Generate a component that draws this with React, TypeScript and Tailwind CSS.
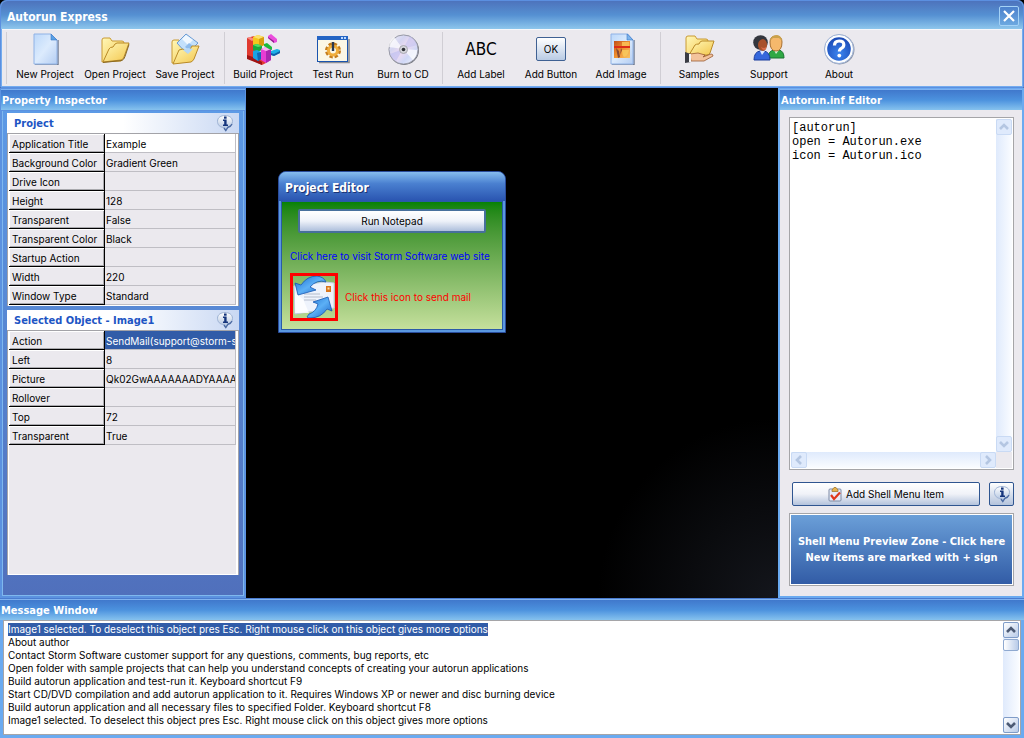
import { useState } from "react";
import type { ReactNode } from "react";

type Property = {
  name: string;
  value: string;
};

type Tool = {
  label: string;
  icon: ReactNode;
};

const projectProperties: Property[] = [
  { name: "Application Title", value: "Example" },
  { name: "Background Color", value: "Gradient Green" },
  { name: "Drive Icon", value: "" },
  { name: "Height", value: "128" },
  { name: "Transparent", value: "False" },
  { name: "Transparent Color", value: "Black" },
  { name: "Startup Action", value: "" },
  { name: "Width", value: "220" },
  { name: "Window Type", value: "Standard" },
];

const objectProperties: Property[] = [
  { name: "Action", value: "SendMail(support@storm-s" },
  { name: "Left", value: "8" },
  { name: "Picture", value: "Qk02GwAAAAAAADYAAAA" },
  { name: "Rollover", value: "" },
  { name: "Top", value: "72" },
  { name: "Transparent", value: "True" },
];

const messages = [
  "Image1 selected. To deselect this object pres Esc. Right mouse click on this object gives more options",
  "About author",
  "Contact Storm Software customer support for any questions, comments, bug reports, etc",
  "Open folder with sample projects that can help you understand concepts of creating your autorun applications",
  "Build autorun application and test-run it. Keyboard shortcut F9",
  "Start CD/DVD compilation and add autorun application to it. Requires Windows XP or newer and disc burning device",
  "Build autorun application and all necessary files to specified Folder. Keyboard shortcut F8",
  "Image1 selected. To deselect this object pres Esc. Right mouse click on this object gives more options",
];

function Gradients() {
  return (
    <svg className="absolute h-0 w-0" aria-hidden="true">
      <defs>
        <linearGradient id="page" x1="0" y1="0" x2="1" y2="1">
          <stop offset="0" stopColor="#bcd8fa" />
          <stop offset="0.5" stopColor="#dcebfd" />
          <stop offset="1" stopColor="#b4cdf2" />
        </linearGradient>
        <linearGradient id="folder" x1="0" y1="0" x2="1" y2="1">
          <stop offset="0" stopColor="#fff8b8" />
          <stop offset="1" stopColor="#f3c64c" />
        </linearGradient>
        <linearGradient id="disc" x1="0" y1="0" x2="1" y2="1">
          <stop offset="0" stopColor="#f2f2fa" />
          <stop offset="0.3" stopColor="#d3d4f0" />
          <stop offset="0.5" stopColor="#f0dcf2" />
          <stop offset="0.7" stopColor="#d0d8f6" />
          <stop offset="1" stopColor="#fafaff" />
        </linearGradient>
        <linearGradient id="glass" x1="0" y1="0" x2="0" y2="1">
          <stop offset="0" stopColor="#ffffff" />
          <stop offset="1" stopColor="#a9bedd" />
        </linearGradient>
        <linearGradient id="arrow" x1="0" y1="0" x2="1" y2="1">
          <stop offset="0" stopColor="#1c6fd0" />
          <stop offset="0.5" stopColor="#5cb0f6" />
          <stop offset="1" stopColor="#1a62c6" />
        </linearGradient>
        <linearGradient id="sunset" x1="0" y1="0" x2="1" y2="1">
          <stop offset="0" stopColor="#c0501c" />
          <stop offset="0.5" stopColor="#f09030" />
          <stop offset="1" stopColor="#f7c565" />
        </linearGradient>
        <radialGradient id="badge" cx="0.5" cy="0.7" r="0.7">
          <stop offset="0" stopColor="#3c86f0" />
          <stop offset="1" stopColor="#1a48b4" />
        </radialGradient>
      </defs>
    </svg>
  );
}

function NewIcon() {
  return (
    <svg width="32" height="32" viewBox="0 0 32 32">
      <path d="M6 32h23V7" fill="none" stroke="#6b7890" strokeWidth="1.4" />
      <path d="M5 1h17l6 6v24H5z" fill="url(#page)" stroke="#8fb2e6" />
      <path d="M22 1v6h6z" fill="#5aa0e4" stroke="#3c78c8" strokeWidth="0.6" />
    </svg>
  );
}

function OpenIcon() {
  return (
    <svg width="32" height="32" viewBox="0 0 32 32">
      <path
        d="M3 29V7q0-2 2-2h6l2 3h10q2 0 2 2v4l-3 14z"
        fill="url(#folder)"
        stroke="#c99a33"
      />
      <path
        d="M4 29l6-13q1-2 4-2 2-4 4-4h12l-5 14q-1 3-3 3z"
        fill="url(#folder)"
        stroke="#b98a28"
      />
      <path d="M4 29.5l19-2q2-1 3-4l4-12" fill="none" stroke="#8a6a25" />
    </svg>
  );
}

function SaveIcon() {
  return (
    <svg width="32" height="32" viewBox="0 0 32 32">
      <path
        d="M3 30V9q0-2 2-2h5l2 3h12q2 0 2 2v4l-3 12z"
        fill="url(#folder)"
        stroke="#c99a33"
      />
      <path d="M8 10L17 1l12 9-11 11z" fill="#c3e0fb" stroke="#6a9bd4" />
      <path d="M13 6l4-4 7 5-5 5z" fill="#f1f8ff" />
      <path d="M16 14l4-4 4 3-4 4z" fill="#8fbcec" />
      <path
        d="M4 31l6-14 4-1 5 4 4-7h7l-5 13q-1 2-3 3z"
        fill="url(#folder)"
        stroke="#b98a28"
      />
      <path d="M14 17l5-2 5 1-5 5z" fill="#b6d8f6" />
    </svg>
  );
}

function BuildIcon() {
  return (
    <svg width="34" height="32" viewBox="0 0 34 32">
      <path d="M1 5l7-2 5 2v18l7 4v3l-4 2-15-7z" fill="#e03a30" />
      <path d="M1 5l3-1 5 2-3 2z" fill="#f88a80" />
      <path d="M1 22l6 2 9 5v3L1 26z" fill="#a01414" />
      <path d="M7 4l5-2 6 2v8l-5 3-6-3z" fill="#f4c61c" />
      <path d="M7 4l5-2 6 2-5 2z" fill="#fae070" />
      <path d="M13 6l5-2v8l-5 3z" fill="#d89c10" />
      <path d="M7 12l4-1 5 2v4l-5 2-4-2z" fill="#18a83c" />
      <path d="M7 12l4-1 5 2-4 1z" fill="#50dc68" />
      <path d="M7 18l4-1 4 2v7l-3 2-5-3z" fill="#18a4e4" />
      <path d="M11 20l4-1v7l-3 2z" fill="#1168b4" />
      <path d="M15 16l5-2 5 2v11l-5 3-5-3z" fill="#e83cd4" />
      <path d="M20 18l5-2v11l-5 3z" fill="#a828b0" />
      <path d="M15 16l5-2 5 2-5 2z" fill="#f8b4f2" />
      <path d="M22 3l3-2 6 5v3l-3 1-6-5z" fill="#ea4cdc" />
      <path d="M22 4l6 4v2l-6-5z" fill="#90208c" />
      <path d="M18 11l3-1 5 4v3l-3-1-5-3z" fill="#1cba3c" />
      <path d="M25 18l6-2 3 1v3l-6 3-3-1z" fill="#1cb0e8" />
      <path d="M25 20l3 1 6-3v2l-6 3-3-1z" fill="#1060a8" />
    </svg>
  );
}

function RunIcon() {
  return (
    <svg width="34" height="32" viewBox="0 0 34 32">
      <path d="M3 29.5h30V6" fill="none" stroke="#8e8f94" strokeWidth="1.6" />
      <rect x="1.5" y="3.5" width="30" height="25" fill="#fbf7e6" stroke="#1a54ae" />
      <rect x="1" y="3" width="31" height="4" fill="#2464c4" />
      <path d="M25 4h2v2h-2zM28 4h2v2h-2z" fill="#bcd8ff" />
      <circle
        cx="17"
        cy="17.5"
        r="6"
        fill="none"
        stroke="#c47c1c"
        strokeWidth="4"
        strokeDasharray="3 1.7"
      />
      <circle cx="17" cy="17.5" r="4.5" fill="#fbf7e6" stroke="#f0ae3c" strokeWidth="3" />
      <path d="M17 9v9" stroke="#2a3850" strokeWidth="2.4" />
    </svg>
  );
}

function DiscIcon() {
  return (
    <svg width="32" height="32" viewBox="0 0 32 32">
      <circle cx="17" cy="17" r="15" fill="#70737c" />
      <circle cx="16.5" cy="16.5" r="14.6" fill="url(#disc)" stroke="#9a9ca8" />
      <path d="M16 16L7 4Q2 8 2 14z" fill="#ffffff" opacity="0.7" />
      <path d="M16 16l10 11q4-4 4-10z" fill="#ffffff" opacity="0.7" />
      <path d="M16 16L3 21q2 5 6 7z" fill="#b9bdf0" opacity="0.6" />
      <path d="M16 16L23 3q5 3 7 9z" fill="#c3c3f0" opacity="0.6" />
      <circle cx="16.5" cy="16.5" r="4" fill="#d5d5dc" stroke="#a8a8b0" />
      <circle cx="16.5" cy="16.5" r="1.8" fill="#303238" />
    </svg>
  );
}

function ImageIcon() {
  return (
    <svg width="32" height="32" viewBox="0 0 32 32">
      <path d="M7 32h22V7" fill="none" stroke="#6b7890" strokeWidth="1.4" />
      <path d="M6 1h17l5 6v24H6z" fill="url(#page)" stroke="#8fb2e6" />
      <path d="M22 1v6h6z" fill="#7cb4ec" stroke="#3c78c8" strokeWidth="0.6" />
      <rect x="9" y="8" width="16" height="17" fill="url(#sunset)" />
      <path d="M17 9h7v4h-7z" fill="#f8b850" />
      <path d="M9 13h16v2H9z" fill="#dc2c18" />
      <path d="M11 15l3 3 1 6-2 1zM16 15l1 2-2 5z" fill="#8a4a34" />
      <path d="M17 17h7q-1 6-5 7-2-2-2-7z" fill="#f8cc60" opacity="0.8" />
    </svg>
  );
}

function SamplesIcon() {
  return (
    <svg width="32" height="32" viewBox="0 0 32 32">
      <path
        d="M3 24V5q0-2 2-2h7l2 3h9q2 0 2 2v15z"
        fill="url(#folder)"
        stroke="#c99a33"
      />
      <path
        d="M6 22l6-10q1-1 4-1 1-3 3-3h12l-4 12q-1 2-3 2z"
        fill="url(#folder)"
        stroke="#b98a28"
      />
      <path
        d="M7 21l8-1 7 2-2 2 8-3q2 0 2 2l-9 5H8z"
        fill="#f3c39c"
        stroke="#9a5c34"
        strokeWidth="0.8"
      />
      <path d="M2 19l6 2v8l-6 1z" fill="#3a3c44" />
      <path d="M6 21h2v8H6z" fill="#f4f4f4" />
    </svg>
  );
}

function SupportIcon() {
  return (
    <svg width="32" height="32" viewBox="0 0 32 32">
      <path d="M15 25q0-7 6-8h5q5 1 5 8z" fill="#2fa844" stroke="#1a7430" />
      <path d="M21 17l2 4 3-4z" fill="#d9f4dc" />
      <path d="M17 9q0-6 6-6t6 6q0 9-6 9t-6-9z" fill="#f5b86c" stroke="#a87032" />
      <path d="M17 8q1-6 7-6 5 1 5 6l-3-3h-6z" fill="#cba24c" />
      <path d="M1 27q0-8 6-9h4q6 1 6 9z" fill="#3567dc" stroke="#1a3c9c" />
      <path d="M7 18l2 4 3-4z" fill="#dce8ff" />
      <circle cx="7.5" cy="9.5" r="7.3" fill="#34363e" />
      <path d="M5 12q0-5 5-6 4 1 4 6t-4 6q-5-1-5-6z" fill="#a8502a" />
      <path d="M8 14q3 2 5 0v2q-2 2-4 0z" fill="#d86c48" />
    </svg>
  );
}

function AboutIcon() {
  return (
    <svg width="32" height="32" viewBox="0 0 32 32">
      <circle cx="16.5" cy="16.5" r="15" fill="#8994a8" />
      <circle cx="16" cy="16" r="14.5" fill="#fbfdff" stroke="#9cb0d4" />
      <circle cx="16" cy="16" r="11.8" fill="url(#badge)" />
      <path
        d="M11.5 12.5q0-4.5 4.7-4.5 4.6 0 4.6 3.8 0 2.4-2.4 3.6-2 1-2 3.2"
        fill="none"
        stroke="#fff"
        strokeWidth="3.2"
      />
      <circle cx="16.3" cy="22.6" r="1.9" fill="#fff" />
    </svg>
  );
}

function InfoIcon() {
  return (
    <svg width="18" height="18" viewBox="0 0 18 18">
      <path
        d="M9 1.5c4 0 7.5 2 7.5 5.8 0 3.2-2 5-4.5 5.8L9.8 16.5 8 13.6C4 13.4 1.5 11 1.5 7.3 1.5 3.5 5 1.5 9 1.5z"
        fill="url(#glass)"
        stroke="#9db2d4"
      />
      <path d="M16 10q-1 2.500-4 3.200l-2.200 3.400L8 14" fill="none" stroke="#4d6ca4" strokeWidth="1.4" />
      <rect x="8" y="2.500" width="2.600" height="2.200" fill="#15357c" />
      <path d="M7 5.500h3.600V10.500H12V12H7v-1.500h1.200V7H7z" fill="#15357c" />
    </svg>
  );
}

function MailIcon() {
  return (
    <svg width="42" height="42" viewBox="0 0 42 42">
      <path d="M1 10l31-4 9 1v25l-39 6z" fill="#eef3fc" stroke="#c3cfe4" />
      <path d="M2 37V17l8 6 6 14z" fill="#ffffff" opacity="0.8" />
      <path d="M11 18h16M11 21h19M11 24h12" stroke="#b4bccb" />
      <rect x="33" y="10" width="5" height="6" fill="#d8741c" />
      <rect x="34.5" y="11.5" width="2" height="2" fill="#fbe0a0" />
      <path
        d="M2 7l6 2Q14 0 24 0q7 1 9 6-9-3-16 5l6 3L5 19z"
        fill="url(#arrow)"
        stroke="#1758b2"
        strokeWidth="0.8"
      />
      <path
        d="M39 35l-5-2q-6 9-17 9-2 0-3-1l2-3q7-2 9-10l-5-2 15-5z"
        fill="url(#arrow)"
        stroke="#1758b2"
        strokeWidth="0.8"
      />
    </svg>
  );
}

function ClipboardIcon() {
  return (
    <svg width="14" height="15" viewBox="0 0 14 15">
      <rect x="1" y="2" width="12" height="12" rx="1" fill="#e6ecf8" stroke="#7c89a4" />
      <path d="M4 3l2-2.5h2L10 3v1.5H4z" fill="#e8b24c" stroke="#9a6e24" strokeWidth="0.7" />
      <path d="M3 8l3 4 6-6.5" fill="none" stroke="#e0391c" strokeWidth="2.2" />
    </svg>
  );
}

const toolGroups: Tool[][] = [
  [
    { label: "New Project", icon: <NewIcon /> },
    { label: "Open Project", icon: <OpenIcon /> },
    { label: "Save Project", icon: <SaveIcon /> },
  ],
  [
    { label: "Build Project", icon: <BuildIcon /> },
    { label: "Test Run", icon: <RunIcon /> },
    { label: "Burn to CD", icon: <DiscIcon /> },
  ],
  [
    {
      label: "Add Label",
      icon: (
        <span className="font-['DejaVu_Sans_Condensed',sans-serif] text-[17px] leading-8">
          ABC
        </span>
      ),
    },
    {
      label: "Add Button",
      icon: (
        <span className="flex h-6 w-[30px] items-center justify-center rounded-xs border border-[#3f6193] bg-linear-to-b from-white to-[#b9cbe4]">
          OK
        </span>
      ),
    },
    { label: "Add Image", icon: <ImageIcon /> },
  ],
  [
    { label: "Samples", icon: <SamplesIcon /> },
    { label: "Support", icon: <SupportIcon /> },
    { label: "About", icon: <AboutIcon /> },
  ],
];

function PanelTitle({ children }: { children: ReactNode }) {
  return (
    <h2 className="h-[21px] shrink-0 border-t border-[#7fb2f0] bg-linear-to-b from-[#4078cc] via-[#4c92de] to-[#86c2ee] px-px font-['DejaVu_Sans_Condensed',sans-serif] text-[11px] leading-[22px] font-bold text-white">
      {children}
    </h2>
  );
}

function PropertySection({
  title,
  properties,
  activeName,
  grow,
}: {
  title: string;
  properties: Property[];
  activeName: string;
  grow?: boolean;
}) {
  return (
    <section className={grow ? "flex flex-1 flex-col" : "flex flex-col"}>
      <div className="flex h-5 items-center justify-between bg-linear-to-r from-white from-50% to-[#c9d8f3] pr-[5px] pl-[7px]">
        <h3 className="font-['DejaVu_Sans_Condensed',sans-serif] text-[11px] font-bold text-[#1d55c4]">
          {title}
        </h3>
        <button type="button" aria-label={`About ${title}`}>
          <InfoIcon />
        </button>
      </div>
      <div className="flex-1 border-x border-t border-[#a3a3a8] bg-white pr-0.5 pb-px pl-px">
        <div className="h-full bg-[#ebe9ee]">
          <table className="w-full table-fixed border-separate border-spacing-0">
            <tbody>
              {properties.map((property) => {
                const id = `${title}-${property.name}`.replace(/\s+/g, "");
                const active = property.name === activeName;
                return (
                  <tr key={property.name}>
                    <th className="w-24 border-r border-b border-black p-0 text-left font-normal">
                      <label
                        htmlFor={id}
                        className="block h-[18px] border-t border-l border-white pl-0.5 leading-[18px] whitespace-nowrap shadow-[inset_-1px_-1px_0_#a9a9ad]"
                      >
                        {property.name}
                      </label>
                    </th>
                    <td className="border-r border-b border-[#bfbec4] p-0">
                      <input
                        id={id}
                        defaultValue={property.value}
                        className={
                          active
                            ? property.name === "Action"
                              ? "block h-[18px] w-full bg-[#315ca8] pt-px pl-px text-white outline-none"
                              : "block h-[18px] w-full bg-white pt-px pl-px outline-none"
                            : "block h-[18px] w-full bg-transparent pt-px pl-px outline-none"
                        }
                      />
                    </td>
                  </tr>
                );
              })}
            </tbody>
          </table>
        </div>
      </div>
    </section>
  );
}

function ScrollButton({
  direction,
  disabled,
}: {
  direction: "up" | "down" | "left" | "right";
  disabled?: boolean;
}) {
  const paths = {
    up: "M3 9l4-4 4 4",
    down: "M3 5l4 4 4-4",
    left: "M9 3L5 7l4 4",
    right: "M5 3l4 4-4 4",
  };

  return (
    <button
      type="button"
      disabled={disabled}
      aria-label={`Scroll ${direction}`}
      className={
        disabled
          ? "flex size-4 shrink-0 items-center justify-center rounded-xs border border-[#c9daf4] bg-[#dfeafc] text-[#b4c6e2]"
          : "flex size-4 shrink-0 items-center justify-center rounded-xs border border-[#7f9cc8] bg-linear-to-br from-white to-[#b9cbe8] text-[#4c5a74]"
      }
    >
      <svg width="14" height="14" viewBox="0 0 14 14">
        <path d={paths[direction]} fill="none" stroke="currentColor" strokeWidth="2.6" />
      </svg>
    </button>
  );
}

function ProjectEditor() {
  return (
    <div className="absolute top-[83px] left-8 w-[228px] overflow-hidden rounded-t-lg border border-[#2a4c9c] bg-[#5a98e0]">
      <h2 className="h-[29px] bg-linear-to-b from-[#86bcee] via-[#4a80d0] via-40% to-[#2a54b0] pl-1.5 font-['DejaVu_Sans_Condensed',sans-serif] text-[12px] leading-[33px] font-bold text-white [text-shadow:1px_1px_0_#1c3474]">
        Project Editor
      </h2>
      <div className="mx-0.5 mb-0.5 flex h-[129px] flex-col border border-[#2a5aa8] bg-linear-to-b from-[#058205] to-[#c5e09c] px-2 pt-[7px]">
        <button
          type="button"
          className="mx-2 h-6 rounded-xs border-2 border-[#47709c] bg-linear-to-b from-white via-[#eef2f9] to-[#aebfdc]"
        >
          Run Notepad
        </button>
        <a href="#site" className="mt-[15px] leading-4 whitespace-nowrap text-[#0000ff]">
          Click here to visit Storm Software web site
        </a>
        <div className="mt-[9px] flex items-center gap-[7px]">
          <div className="border-3 border-[#ff0000]">
            <MailIcon />
          </div>
          <span className="text-[#ff0000]">Click this icon to send mail</span>
        </div>
      </div>
    </div>
  );
}

function App() {
  const [selected, setSelected] = useState<number>(0);
  const [script, setScript] = useState<string>(
    "[autorun]\nopen = Autorun.exe\nicon = Autorun.ico"
  );

  return (
    <div className="flex min-h-screen flex-col bg-black font-[Inter,'Noto_Sans',sans-serif] text-[10px] leading-[13px] text-black">
      <Gradients />
      <header className="rounded-t-md border border-[#5b8fe0] bg-[#74acee]">
        <div className="flex h-7 items-center justify-between rounded-t-md bg-linear-to-b from-[#4d73bc] via-[#5590d2] to-[#8ec6ec] pr-1 pl-1.5">
          <h1 className="pt-1 font-['DejaVu_Sans_Condensed',sans-serif] text-[12px] leading-5 font-bold text-white">
            Autorun Express
          </h1>
          <button
            type="button"
            aria-label="Close"
            className="mt-px flex size-5 items-center justify-center rounded-xs border border-[#a4d2f6] bg-linear-to-b from-[#4b80cc] to-[#6ca8e0]"
          >
            <svg width="14" height="14" viewBox="0 0 14 14">
              <path d="M2 2l10 10M12 2L2 12" stroke="#fff" strokeWidth="2.2" />
            </svg>
          </button>
        </div>
        <nav className="mx-px mb-px flex h-[57px] border-t border-[#f7f7fa] bg-[#ebe9ee]">
          {toolGroups.map((group, index) => (
            <div key={index} className="flex">
              <div className="my-0.5 mr-[3px] ml-1 w-px bg-[#d0ced4]" />
              {group.map((tool) => (
                <button
                  key={tool.label}
                  type="button"
                  className="flex w-[70px] flex-col items-center gap-px pt-[3px]"
                >
                  <span className="flex h-8 items-center justify-center">{tool.icon}</span>
                  <span className="leading-4 whitespace-nowrap">{tool.label}</span>
                </button>
              ))}
            </div>
          ))}
        </nav>
      </header>

      <div className="flex flex-1">
        <aside className="flex w-[246px] shrink-0 flex-col border border-[#5b92e0] bg-[#5b92e0]">
          <PanelTitle>Property Inspector</PanelTitle>
          <div className="m-px flex flex-1 flex-col gap-1 border-x border-b border-[#7fb8ee] bg-linear-to-b from-[#5c9ae6] to-[#5070bc] px-1 pt-0.5 pb-5">
            <PropertySection
              title="Project"
              properties={projectProperties}
              activeName="Application Title"
            />
            <PropertySection
              title="Selected Object - Image1"
              properties={objectProperties}
              activeName="Action"
              grow
            />
          </div>
        </aside>

        <main className="relative flex-1 bg-black bg-[radial-gradient(circle_at_bottom_right,#14161c,#000_180px)]">
          <ProjectEditor />
        </main>

        <aside className="flex w-[246px] shrink-0 flex-col border-2 border-t border-[#6aaaf0] bg-[#ebe9ee]">
          <PanelTitle>Autorun.inf Editor</PanelTitle>
          <div className="flex flex-1 flex-col pt-[7px] pr-2 pb-2.5 pl-[9px]">
            <div className="flex flex-1 flex-col border border-[#a5a5a8] bg-white p-px">
              <div className="flex flex-1">
                <textarea
                  aria-label="Autorun.inf"
                  value={script}
                  onChange={(e) => setScript(e.target.value)}
                  className="min-w-0 flex-1 resize-none overflow-hidden px-px py-0.5 font-['Liberation_Mono',monospace] text-[12px] leading-[14px] outline-none"
                />
                <div className="flex w-4 flex-col justify-between bg-linear-to-r from-[#dfeafc] to-[#fafcff]">
                  <ScrollButton direction="up" disabled />
                  <ScrollButton direction="down" disabled />
                </div>
              </div>
              <div className="flex">
                <div className="flex flex-1 justify-between bg-linear-to-b from-[#dfeafc] to-[#fafcff]">
                  <ScrollButton direction="left" disabled />
                  <ScrollButton direction="right" disabled />
                </div>
                <div className="w-4 bg-[#ebe9ee]" />
              </div>
            </div>
            <div className="mt-3 flex gap-[9px] pl-[3px]">
              <button
                type="button"
                className="flex h-6 flex-1 items-center justify-center gap-1 rounded-xs border border-[#2f5590] bg-linear-to-b from-white via-[#f0f2f8] to-[#b4c3dc]"
              >
                <ClipboardIcon />
                Add Shell Menu Item
              </button>
              <button
                type="button"
                aria-label="Shell menu help"
                className="flex h-6 w-[25px] items-center justify-center rounded-xs border border-[#2f5590] bg-linear-to-b from-white to-[#b4c3dc]"
              >
                <InfoIcon />
              </button>
            </div>
            <div className="mt-[7px] border border-[#a5a5a8] bg-white p-px">
              <button
                type="button"
                className="h-[69px] w-full bg-linear-to-b from-[#6b9fd8] to-[#325ca6] font-['DejaVu_Sans_Condensed',sans-serif] text-[11px] leading-4 font-bold whitespace-nowrap text-white"
              >
                Shell Menu Preview Zone - Click here
                <br />
                New items are marked with + sign
              </button>
            </div>
          </div>
        </aside>
      </div>

      <section className="border-t border-[#4a7cd0] bg-[#6aaaf0]">
        <PanelTitle>Message Window</PanelTitle>
        <div className="mx-[3px] mb-[3px] flex border border-[#a5a5a8] bg-white p-px">
          <ul className="h-[111px] flex-1 overflow-hidden pt-px pl-[3px]">
            {messages.map((message, index) => (
              <li key={index} onClick={() => setSelected(index)} className="h-[13px]">
                <span
                  className={
                    selected === index
                      ? "inline-block bg-[#315ca8] text-white"
                      : "inline-block"
                  }
                >
                  {message}
                </span>
              </li>
            ))}
          </ul>
          <div className="flex w-4 flex-col bg-linear-to-r from-[#dfeafc] to-[#fafcff]">
            <ScrollButton direction="up" />
            <div className="mt-px mb-auto h-3 rounded-xs border border-[#8fa9d0] bg-linear-to-r from-white to-[#b9cbe8]" />
            <ScrollButton direction="down" />
          </div>
        </div>
      </section>
    </div>
  );
}

export default App;
